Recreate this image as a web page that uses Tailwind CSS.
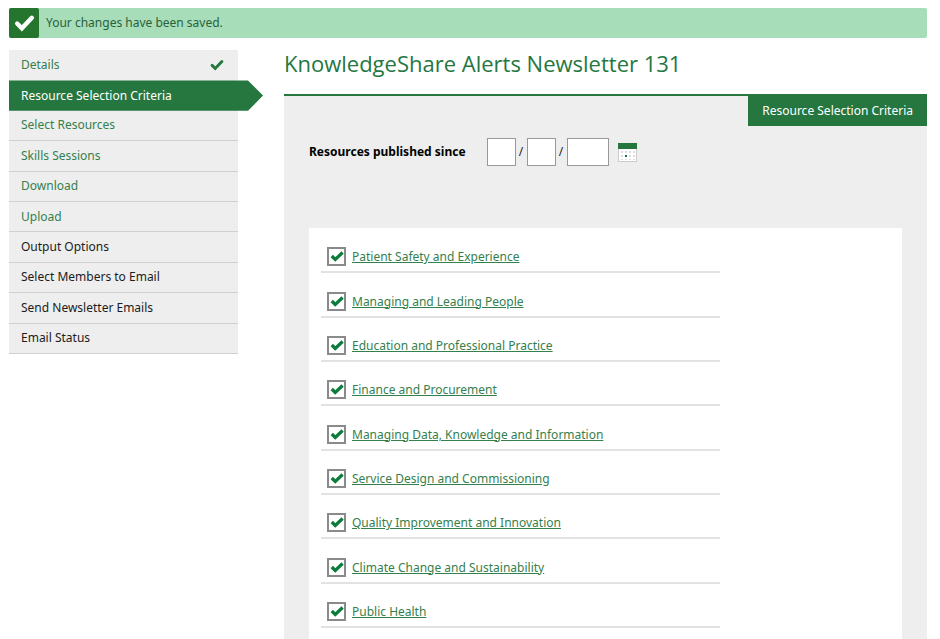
<!DOCTYPE html>
<html lang="en">
<head>
    <meta charset="UTF-8">
    <meta name="viewport" content="width=device-width, initial-scale=1">
    <title>KnowledgeShare Alerts Newsletter 131</title>
    <script src="https://cdn.jsdelivr.net/npm/@tailwindcss/browser@4"></script>
</head>
<body class="flex min-h-screen flex-col bg-white px-[9px] pt-2 pr-[13px] font-['Noto_Sans',sans-serif] text-[12px] leading-5 text-[#1c1c1c]">
    <svg class="hidden">
        <symbol id="tick" viewBox="0 0 20 17">
            <path d="M3 9l4.500 4.500L17 3.500" fill="none" stroke="currentColor" stroke-width="4.200" stroke-linecap="round" />
        </symbol>
        <symbol id="tick-square" viewBox="0 0 20 17">
            <path d="M2.500 8.500l5 5L18 3.500" fill="none" stroke="currentColor" stroke-width="4.600" />
        </symbol>
    </svg>

    <div role="status" class="flex h-[30px] items-center rounded-xs bg-[#a7deb9] text-[#27613c]">
        <span class="flex h-[30px] w-[30px] items-center justify-center rounded-xs bg-[#25752f] text-white">
            <svg class="h-[18px] w-[21px]"><use href="#tick" /></svg>
        </span>
        <p class="pl-[7px]">Your changes have been saved.</p>
    </div>

    <div class="mt-3 flex flex-1 items-stretch">
        <nav class="w-[229px] shrink-0">
            <ul id="steps" class="grid min-h-[304px] auto-rows-fr bg-[#eee]"></ul>
        </nav>

        <main class="ml-[46px] flex min-w-0 flex-1 flex-col">
            <h1 class="pb-[18px] font-['Open_Sans',sans-serif] text-[22px] leading-[26px] text-[#25773f]">KnowledgeShare Alerts Newsletter 131</h1>
            <section class="flex flex-1 flex-col border-t-2 border-[#25773f] bg-[#eee]">
                <h2 class="self-end bg-[#25773f] px-[14px] py-[5px] text-white">Resource Selection Criteria</h2>

                <form class="flex items-center px-[25px] pt-3">
                    <fieldset class="flex items-center">
                        <legend class="float-left mr-[21px] font-bold text-black">Resources published since</legend>
                        <input type="text" id="day" aria-label="Day" class="h-7 w-[29px] border border-[#999] bg-white px-1">
                        <span class="w-[11px] text-center">/</span>
                        <input type="text" id="month" aria-label="Month" class="h-7 w-[29px] border border-[#999] bg-white px-1">
                        <span class="w-[11px] text-center">/</span>
                        <input type="text" id="year" aria-label="Year" class="h-7 w-[42px] border border-[#999] bg-white px-1">
                    </fieldset>
                    <button type="button" aria-label="Choose a date" class="ml-[9px]">
                        <svg class="h-[19px] w-[19px]" viewBox="0 0 19 19">
                            <rect x=".5" y=".5" width="18" height="18" fill="#fff" stroke="#ccc" />
                            <rect width="19" height="6" fill="#25773f" />
                            <g fill="#dcdcdc">
                                <path d="M3 8h2v2H3zM7 8h2v2H7zM11 8h2v2h-2zM15 8h2v2h-2z" />
                                <path d="M3 12h2v2H3zM11 12h2v2h-2zM15 12h2v2h-2z" />
                                <path d="M3 16h2v1H3zM7 16h2v1H7zM11 16h2v1h-2zM15 16h2v1h-2z" />
                            </g>
                            <rect x="7" y="12" width="2" height="2" fill="#117a3a" />
                        </svg>
                    </button>
                </form>

                <div class="mx-[25px] mt-[62px] flex-1 bg-white px-3 pt-px">
                    <ul id="topics" class="grid min-h-[399px] max-w-[399px] auto-rows-fr"></ul>
                </div>
            </section>
        </main>
    </div>

    <script>
    const steps = [
        { name: 'Details', link: true, done: true },
        { name: 'Resource Selection Criteria', current: true },
        { name: 'Select Resources', link: true },
        { name: 'Skills Sessions', link: true },
        { name: 'Download', link: true },
        { name: 'Upload', link: true },
        { name: 'Output Options' },
        { name: 'Select Members to Email' },
        { name: 'Send Newsletter Emails' },
        { name: 'Email Status' }
    ];
    const topics = [
        'Patient Safety and Experience',
        'Managing and Leading People',
        'Education and Professional Practice',
        'Finance and Procurement',
        'Managing Data, Knowledge and Information',
        'Service Design and Commissioning',
        'Quality Improvement and Innovation',
        'Climate Change and Sustainability',
        'Public Health'
    ];

    const stepList = document.getElementById('steps');
    steps.forEach(s => {
        const li = document.createElement('li');
        if (s.current) {
            // wider than the list, with an arrow on the right
            li.className = "-mr-[25px] flex items-center bg-[#25773f] px-3 text-white [clip-path:polygon(0_0,calc(100%-15px)_0,100%_50%,calc(100%-15px)_100%,0_100%)]";
            li.innerHTML = `<a href="#" aria-current="step">${s.name}</a>`;
        } else {
            const line = s.done ? "" : "border-b border-[#d0d0d0]";
            li.className = `flex items-center justify-between px-3 ${line}`;
            li.innerHTML = s.link ? `<a href="#" class="text-[#357f4d]">${s.name}</a>` : `<span>${s.name}</span>`;
        }
        if (s.done) {
            li.innerHTML += `<svg class="mr-[2px] h-3 w-[14px] text-[#25773f]"><use href="#tick" /></svg>`;
        }
        stepList.appendChild(li);
    });

    const topicList = document.getElementById('topics');
    topics.forEach((t, i) => {
        const li = document.createElement('li');
        li.className = "flex items-end border-b-2 border-[#e2e2e2] px-[6px] pb-1";
        li.innerHTML = `<span class="relative mr-[6px] h-5 w-[19px]">
            <input type="checkbox" id="topic-${i}" aria-labelledby="topic-name-${i}" checked class="peer block h-[19px] w-[19px] appearance-none border-2 border-[#8a8a8a] bg-white">
            <svg class="pointer-events-none absolute top-[3px] left-[3px] hidden h-3 w-[14px] text-[#0b7d3b] peer-checked:block"><use href="#tick-square" /></svg>
            </span>
            <a href="#" id="topic-name-${i}" class="text-[#357f4d] underline">${t}</a>`;
        topicList.appendChild(li);
    });
    </script>
</body>
</html>
